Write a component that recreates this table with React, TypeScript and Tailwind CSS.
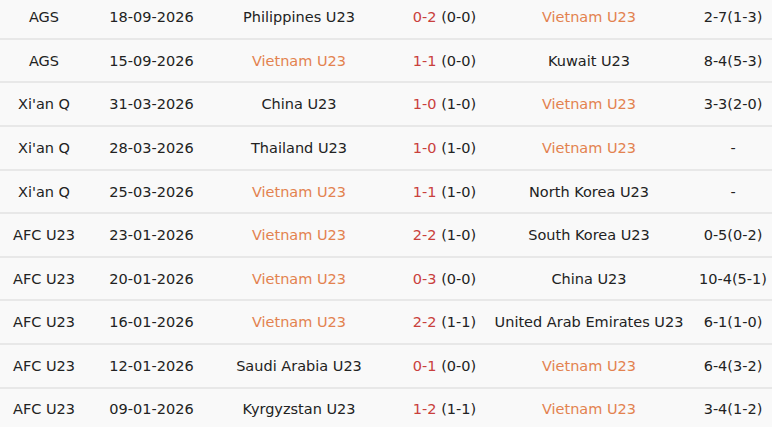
import React from "react";

type Match = {
  comp: string;
  date: string;
  home: string;
  score: string;
  half: string;
  away: string;
  extra: string;
};

const VN = "Vietnam U23";

const matches: Match[] = [
  { comp: "AGS", date: "18-09-2026", home: "Philippines U23", score: "0-2", half: "(0-0)", away: VN, extra: "2-7(1-3)" },
  { comp: "AGS", date: "15-09-2026", home: VN, score: "1-1", half: "(0-0)", away: "Kuwait U23", extra: "8-4(5-3)" },
  { comp: "Xi'an Q", date: "31-03-2026", home: "China U23", score: "1-0", half: "(1-0)", away: VN, extra: "3-3(2-0)" },
  { comp: "Xi'an Q", date: "28-03-2026", home: "Thailand U23", score: "1-0", half: "(1-0)", away: VN, extra: "-" },
  { comp: "Xi'an Q", date: "25-03-2026", home: VN, score: "1-1", half: "(1-0)", away: "North Korea U23", extra: "-" },
  { comp: "AFC U23", date: "23-01-2026", home: VN, score: "2-2", half: "(1-0)", away: "South Korea U23", extra: "0-5(0-2)" },
  { comp: "AFC U23", date: "20-01-2026", home: VN, score: "0-3", half: "(0-0)", away: "China U23", extra: "10-4(5-1)" },
  { comp: "AFC U23", date: "16-01-2026", home: VN, score: "2-2", half: "(1-1)", away: "United Arab Emirates U23", extra: "6-1(1-0)" },
  { comp: "AFC U23", date: "12-01-2026", home: "Saudi Arabia U23", score: "0-1", half: "(0-0)", away: VN, extra: "6-4(3-2)" },
  { comp: "AFC U23", date: "09-01-2026", home: "Kyrgyzstan U23", score: "1-2", half: "(1-1)", away: VN, extra: "3-4(1-2)" },
];

const Team: React.FC<{ name: string }> = ({ name }) => (
  <span className={name === VN ? "text-[#e3824f]" : "text-[#222]"}>{name}</span>
);

export default function App() {
  return (
    <div className="w-[772px] h-[427px] overflow-hidden bg-[#f9f9f9] font-['DejaVu_Sans',sans-serif] text-[14.5px] text-[#222]">
      <div className="-mt-[3.8px]">
        {matches.map((m, i) => (
          <div
            key={i}
            className="grid h-[43.6px] grid-cols-[88px_127px_168px_123px_166px_122px] items-center pt-[2px] border-b-2 border-[#e8e8e8] whitespace-nowrap text-center"
          >
            <div>{m.comp}</div>
            <div>{m.date}</div>
            <div className="flex justify-center">
              <Team name={m.home} />
            </div>
            <div>
              <span className="text-[#c9403c]">{m.score}</span> {m.half}
            </div>
            <div className="flex justify-center">
              <Team name={m.away} />
            </div>
            <div>{m.extra}</div>
          </div>
        ))}
      </div>
    </div>
  );
}
